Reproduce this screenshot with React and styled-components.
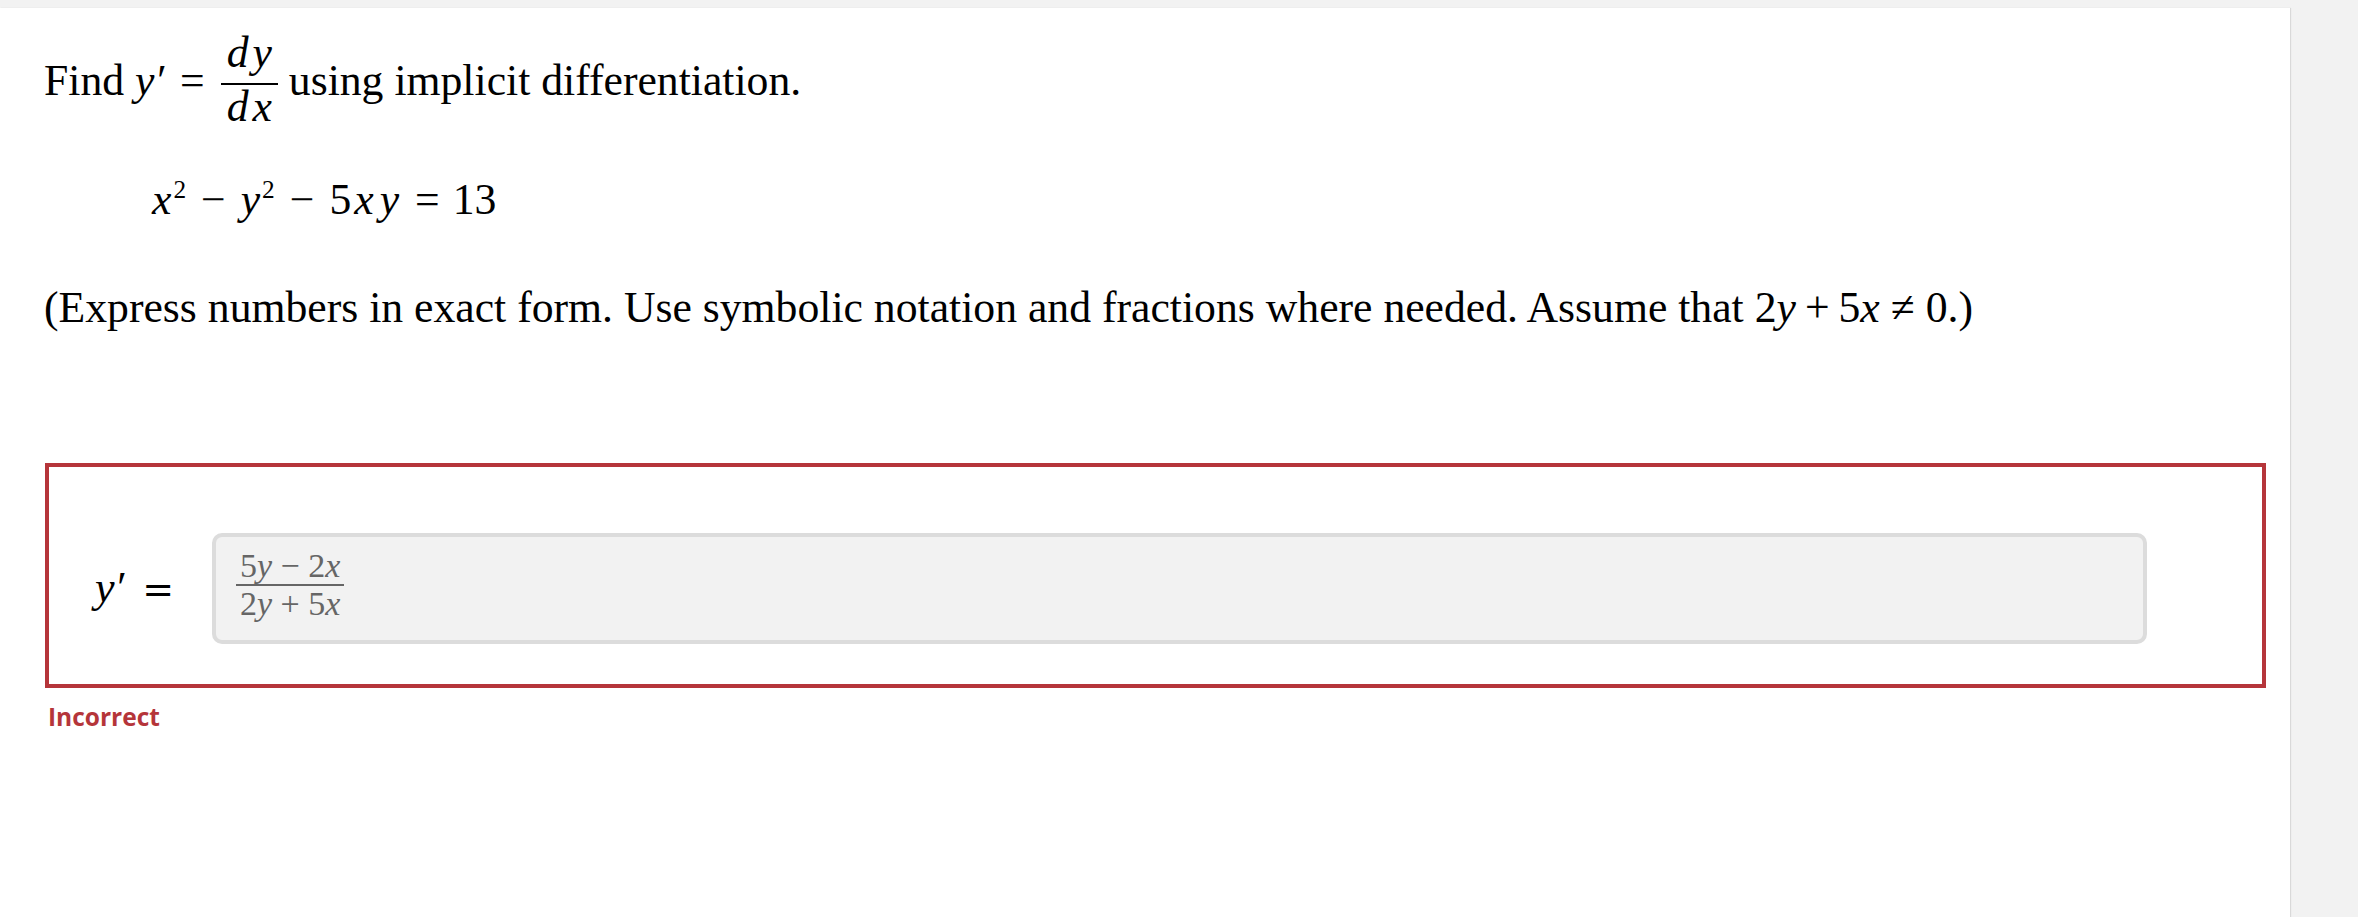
import React from 'react';
import styled, { createGlobalStyle } from 'styled-components';

const Global = createGlobalStyle`
  html, body { margin: 0; padding: 0; background: #f2f2f2; }
  body { font-family: "Liberation Serif", "Times New Roman", serif; color: #000; }
  * { box-sizing: border-box; }
`;

const Page = styled.div`
  display: flex;
  min-height: 917px;
  padding-top: 8px;
`;

const Panel = styled.main`
  width: 2290px;
  min-height: 909px;
  background: #fff;
  box-shadow: 1px 0 1px rgba(0, 0, 0, 0.1);
  padding: 0 24px 0 44px;
`;

const Line = styled.p`
  margin: ${(p) => p.$top}px 0 0 ${(p) => p.$indent || 0}px;
  font-size: 43.7px;
  line-height: 1;
  white-space: nowrap;
`;

const Var = styled.i`
  font-style: italic;
  padding: 0 ${(p) => p.$pad || 0}px;
`;

const Op = styled.span`
  display: inline-block;
  margin: 0 ${(p) => p.$m}px;
`;

const Sup = styled.span`
  font-size: 0.58em;
  line-height: 0;
  vertical-align: 16px;
  margin-left: 2px;
`;

const Frac = styled.span`
  display: inline-flex;
  flex-direction: column;
  align-items: center;
  vertical-align: 28px;
  line-height: 1;
`;

const Num = styled.span`
  padding: 0 4px 8px;
`;

const Bar = styled.span`
  align-self: stretch;
  height: 2px;
  background: currentColor;
`;

const Den = styled.span`
  padding: 0 4px;
`;

const AnswerBox = styled.section`
  margin: 133px 0 0 1px;
  height: 225px;
  border: 4px solid #b5353a;
  padding: 62px 115px 36px 46px;
  display: flex;
  align-items: center;
`;

const Label = styled.div`
  width: 117px;
  flex: none;
  font-size: 44px;
  line-height: 1;
  white-space: nowrap;
`;

const Equals = styled.span`
  display: inline-block;
  margin-left: 18px;
  font-family: "DejaVu Sans", "Liberation Sans", sans-serif;
  font-size: 38px;
`;

const Input = styled.div`
  flex: 1;
  height: 111px;
  border: 4px solid #dcdcdc;
  border-radius: 10px;
  background: #f2f2f2;
  padding-left: 20px;
  display: flex;
  align-items: center;
`;

const AnsFrac = styled.div`
  display: inline-flex;
  flex-direction: column;
  align-items: center;
  color: #666;
  font-size: 34px;
  line-height: 1;
  margin-bottom: 7px;
  white-space: nowrap;
`;

const AnsNum = styled.span`
  padding: 0 4px;
  margin-bottom: 1px;
`;

const AnsDen = styled.span`
  padding: 1px 4px 0;
`;

const Feedback = styled.div`
  margin: 17px 0 0 4px;
  font-family: "Open Sans", "Liberation Sans", sans-serif;
  font-weight: 700;
  font-size: 24.5px;
  line-height: 1;
  color: #b5353a;
`;

export default function App() {
  return (
    <>
      <Global />
      <Page>
        <Panel>
          <Line $top={23}>
            Find <Var>y′</Var>
            <Op $m={16}>=</Op>
            <Frac>
              <Num>
                <Var $pad={2}>d</Var>
                <Var $pad={2}>y</Var>
              </Num>
              <Bar />
              <Den>
                <Var $pad={2}>d</Var>
                <Var $pad={2}>x</Var>
              </Den>
            </Frac>{' '}
            using implicit differentiation.
          </Line>
          <Line $top={50} $indent={108}>
            <Var>x</Var>
            <Sup>2</Sup>
            <Op $m={15}>−</Op>
            <Var>y</Var>
            <Sup>2</Sup>
            <Op $m={15}>−</Op>
            5<Var $pad={3}>x</Var>
            <Var $pad={3}>y</Var>
            <Op $m={13}>=</Op>
            13
          </Line>
          <Line $top={64}>
            (Express numbers in exact form. Use symbolic notation and fractions where needed. Assume that 2
            <Var>y</Var>
            <Op $m={9}>+</Op>5<Var>x</Var>
            <Op $m={11}>≠</Op>0.)
          </Line>
          <AnswerBox>
            <Label>
              <Var>y′</Var>
              <Equals>=</Equals>
            </Label>
            <Input>
              <AnsFrac>
                <AnsNum>
                  5<Var>y</Var> − 2<Var>x</Var>
                </AnsNum>
                <Bar />
                <AnsDen>
                  2<Var>y</Var> + 5<Var>x</Var>
                </AnsDen>
              </AnsFrac>
            </Input>
          </AnswerBox>
          <Feedback>Incorrect</Feedback>
        </Panel>
      </Page>
    </>
  );
}
